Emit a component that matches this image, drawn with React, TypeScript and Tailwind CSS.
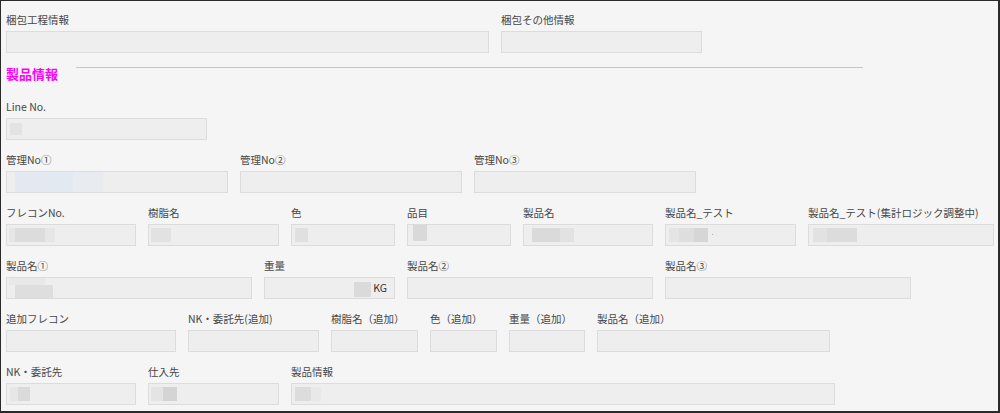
import type { ReactNode } from "react";

type Blot = { left: number; top?: number; width: number; height?: number; color: string };

const Field = ({
  label,
  width,
  blots = [],
  suffix,
}: {
  label: string;
  width: string;
  blots?: Blot[];
  suffix?: ReactNode;
}) => (
  <div className={`flex flex-col ${width}`}>
    <div className="h-[14px] text-[10.5px] leading-[14px] text-[#474747] whitespace-nowrap">{label}</div>
    <div className="relative mt-[4px] h-[22px] border border-[#dcdcdc] bg-[#eeeeee]">
      {blots.map((b, i) => (
        <span
          key={i}
          className="absolute"
          style={{
            left: b.left,
            top: b.top ?? 3,
            width: b.width,
            height: b.height ?? 14,
            background: b.color,
          }}
        />
      ))}
      {suffix}
    </div>
  </div>
);

export default function App() {
  return (
    <div
      className="h-[413px] w-[1000px] overflow-hidden border-t border-l border-r-2 border-b-2 border-[#2a2a2a] bg-[#f5f5f5] pl-[5px] pt-[12px]"
      style={{ fontFamily: '"Noto Sans CJK JP", "Noto Sans", sans-serif' }}
    >
      <div className="flex gap-3">
        <Field label="梱包工程情報" width="w-[483px]" />
        <Field label="梱包その他情報" width="w-[201px]" />
      </div>

      <div className="mt-[13px] mb-[18px] flex items-start">
        <h3 className="w-[70px] text-[13px] font-bold leading-[16px] text-[#ff00ff]">製品情報</h3>
        <div className="mt-[1px] h-px w-[787px] bg-[#c6c6c6]" />
      </div>

      <div className="flex gap-3">
        <Field label="Line No." width="w-[201px]" blots={[{ left: 3, top: 4, width: 12, height: 12, color: "#e3e3e3" }]} />
      </div>

      <div className="mt-[13px] flex gap-3">
        <Field
          label="管理No①"
          width="w-[222px]"
          blots={[
            { left: 8, top: 0, width: 58, height: 20, color: "#e3e9f0" },
            { left: 66, top: 0, width: 30, height: 20, color: "#e8ecf1" },
          ]}
        />
        <Field label="管理No②" width="w-[222px]" />
        <Field label="管理No③" width="w-[222px]" />
      </div>

      <div className="mt-[13px] flex gap-3">
        <Field
          label="フレコンNo."
          width="w-[130px]"
          blots={[
            { left: 2, width: 8, color: "#e6e6e6" },
            { left: 8, width: 30, color: "#dcdcdc" },
            { left: 38, width: 10, color: "#e6e6e6" },
          ]}
        />
        <Field label="樹脂名" width="w-[131px]" blots={[{ left: 2, width: 20, color: "#e2e2e2" }]} />
        <Field label="色" width="w-[104px]" blots={[{ left: 3, width: 13, color: "#e0e0e0" }]} />
        <Field label="品目" width="w-[104px]" blots={[{ left: 5, top: 0, width: 14, height: 16, color: "#d9d9d9" }]} />
        <Field
          label="製品名"
          width="w-[130px]"
          blots={[
            { left: 8, width: 28, color: "#dadada" },
            { left: 36, width: 14, color: "#e2e2e2" },
          ]}
        />
        <Field
          label="製品名_テスト"
          width="w-[131px]"
          blots={[
            { left: 3, width: 10, color: "#e4e4e4" },
            { left: 13, width: 15, color: "#dedede" },
            { left: 28, width: 14, color: "#d6d6d6" },
            { left: 46, top: 9, width: 1, height: 1, color: "#9fb4c8" },
          ]}
        />
        <Field
          label="製品名_テスト(集計ロジック調整中)"
          width="w-[186px]"
          blots={[
            { left: 4, width: 14, color: "#e2e2e2" },
            { left: 18, width: 30, color: "#dcdcdc" },
          ]}
        />
      </div>

      <div className="mt-[13px] flex gap-3">
        <Field
          label="製品名①"
          width="w-[246px]"
          blots={[
            { left: 2, top: 0, width: 36, height: 7, color: "#e8e8e8" },
            { left: 8, top: 7, width: 38, height: 13, color: "#dedede" },
          ]}
        />
        <Field
          label="重量"
          width="w-[131px]"
          blots={[{ left: 89, top: 4, width: 17, height: 15, color: "#dadada" }]}
          suffix={
            <span className="absolute right-[7px] top-[3px] text-[10.5px] leading-[14px] text-[#333]">KG</span>
          }
        />
        <Field label="製品名②" width="w-[246px]" />
        <Field label="製品名③" width="w-[246px]" />
      </div>

      <div className="mt-[13px] flex gap-3">
        <Field label="追加フレコン" width="w-[170px]" />
        <Field label="NK・委託先(追加)" width="w-[131px]" />
        <Field label="樹脂名（追加）" width="w-[87px]" />
        <Field label="色（追加）" width="w-[67px]" />
        <Field label="重量（追加）" width="w-[76px]" />
        <Field label="製品名（追加）" width="w-[233px]" />
      </div>

      <div className="mt-[13px] flex gap-3">
        <Field
          label="NK・委託先"
          width="w-[130px]"
          blots={[
            { left: 3, width: 8, color: "#e6e6e6" },
            { left: 11, width: 12, color: "#dadada" },
          ]}
        />
        <Field
          label="仕入先"
          width="w-[131px]"
          blots={[
            { left: 2, width: 12, color: "#e4e4e4" },
            { left: 14, width: 14, color: "#d4d4d4" },
          ]}
        />
        <Field
          label="製品情報"
          width="w-[544px]"
          blots={[
            { left: 3, width: 16, color: "#dcdcdc" },
            { left: 19, width: 10, color: "#e8e8e8" },
          ]}
        />
      </div>
    </div>
  );
}
